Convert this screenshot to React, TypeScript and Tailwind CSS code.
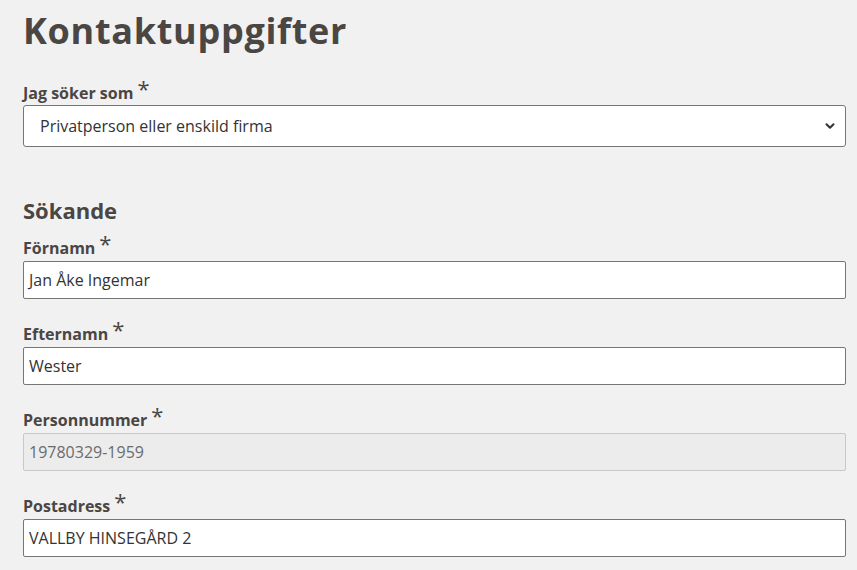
import { ChevronDown } from 'lucide-react'

function Label({ text }: { text: string }) {
  return (
    <div className="flex items-start h-[21px] text-[16px] leading-[21px] font-bold text-[#4a4644]">
      <span className="self-end">{text}</span>
      <span className="ml-[4px] text-[22px] font-normal leading-[22px] -mt-[6px]">*</span>
    </div>
  )
}

function Field({ label, value, disabled }: { label: string; value: string; disabled?: boolean }) {
  return (
    <div className="mt-[25px]">
      <Label text={label} />
      <div
        className={
          disabled
            ? 'mt-[2px] h-[38px] flex items-center px-[5px] border border-[#c8c8c8] rounded-[2px] bg-[#ececec] text-[16px] text-[#6b6b6b]'
            : 'mt-[2px] h-[38px] flex items-center px-[5px] border border-[#767676] rounded-[2px] bg-white text-[16px] text-[#333]'
        }
      >
        {value}
      </div>
    </div>
  )
}

export default function App() {
  return (
    <div className="min-h-[570px] w-full bg-[#f1f1f1] pl-[23px] pr-[11px] font-['Open_Sans',sans-serif] text-[#4a4644]">
      <h1 className="pt-[9px] text-[36px] leading-[44px] font-bold tracking-[0.7px]">Kontaktuppgifter</h1>
      <div className="mt-[30px]">
        <Label text="Jag söker som" />
        <div className="mt-[1px] h-[42px] flex items-center justify-between pl-[16px] pr-[8px] border border-[#767676] rounded-[3px] bg-white text-[16px] text-[#333]">
          <span>Privatperson eller enskild firma</span>
          <ChevronDown size={14} strokeWidth={3.5} className="text-[#333]" />
        </div>
      </div>
      <h2 className="mt-[49px] text-[22px] leading-[28px] font-bold">Sökande</h2>
      <div className="-mt-[11px]">
        <Field label="Förnamn" value="Jan Åke Ingemar" />
        <Field label="Efternamn" value="Wester" />
        <Field label="Personnummer" value="19780329-1959" disabled />
        <Field label="Postadress" value="VALLBY HINSEGÅRD 2" />
      </div>
    </div>
  )
}
